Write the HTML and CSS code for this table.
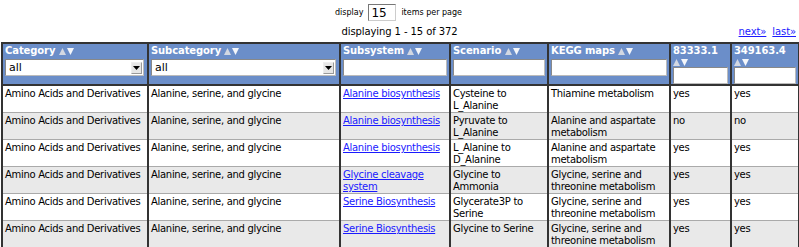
FILE: index.html
```html
<!DOCTYPE html>
<html>
<head>
<meta charset="utf-8">
<link rel="stylesheet" href="styles.css">
</head>
<body>
<div class="page">
  <div class="perpage">
    <span class="small">display</span>
    <input class="count" type="text" value="15">
    <span class="small">items per page</span>
  </div>
  <div class="pager">
    <span class="status">displaying 1 - 15 of 372</span>
    <span class="nav"><a href="#">next»</a><a href="#">last»</a></span>
  </div>
  <table class="grid">
    <colgroup>
      <col class="w1"><col class="w2"><col class="w3"><col class="w4"><col class="w5"><col class="w6"><col class="w7">
    </colgroup>
    <thead>
      <tr>
        <th><div class="ttl">Category <svg class="sort" viewBox="0 0 16 7" width="16" height="7"><polygon class="up" points="0,7 3.5,0 7,7"/><polygon class="dn" points="8,0 15,0 11.5,7"/></svg></div>
          <div class="sel sel1"><span class="val">all</span><span class="btn"><svg viewBox="0 0 7 4" width="7" height="4"><polygon points="0,0 7,0 3.5,4"/></svg></span></div></th>
        <th><div class="ttl">Subcategory <svg class="sort" viewBox="0 0 16 7" width="16" height="7"><polygon class="up" points="0,7 3.5,0 7,7"/><polygon class="dn" points="8,0 15,0 11.5,7"/></svg></div>
          <div class="sel sel2"><span class="val">all</span><span class="btn"><svg viewBox="0 0 7 4" width="7" height="4"><polygon points="0,0 7,0 3.5,4"/></svg></span></div></th>
        <th><div class="ttl">Subsystem <svg class="sort" viewBox="0 0 16 7" width="16" height="7"><polygon class="up" points="0,7 3.5,0 7,7"/><polygon class="dn" points="8,0 15,0 11.5,7"/></svg></div>
          <input class="flt" type="text"></th>
        <th><div class="ttl">Scenario <svg class="sort" viewBox="0 0 16 7" width="16" height="7"><polygon class="up" points="0,7 3.5,0 7,7"/><polygon class="dn" points="8,0 15,0 11.5,7"/></svg></div>
          <input class="flt" type="text"></th>
        <th><div class="ttl">KEGG maps <svg class="sort" viewBox="0 0 16 7" width="16" height="7"><polygon class="up" points="0,7 3.5,0 7,7"/><polygon class="dn" points="8,0 15,0 11.5,7"/></svg></div>
          <input class="flt" type="text"></th>
        <th><div class="ttl">83333.1 <svg class="sort" viewBox="0 0 16 7" width="16" height="7"><polygon class="up" points="0,7 3.5,0 7,7"/><polygon class="dn" points="8,0 15,0 11.5,7"/></svg></div>
          <input class="flt" type="text"></th>
        <th><div class="ttl">349163.4 <svg class="sort" viewBox="0 0 16 7" width="16" height="7"><polygon class="up" points="0,7 3.5,0 7,7"/><polygon class="dn" points="8,0 15,0 11.5,7"/></svg></div>
          <input class="flt" type="text"></th>
      </tr>
    </thead>
    <tbody>
      <tr>
        <td>Amino Acids and Derivatives</td><td>Alanine, serine, and glycine</td><td><a href="#">Alanine biosynthesis</a></td><td>Cysteine to L_Alanine</td><td>Thiamine metabolism</td><td>yes</td><td>yes</td>
      </tr>
      <tr class="alt">
        <td>Amino Acids and Derivatives</td><td>Alanine, serine, and glycine</td><td><a href="#">Alanine biosynthesis</a></td><td>Pyruvate to L_Alanine</td><td>Alanine and aspartate metabolism</td><td>no</td><td>no</td>
      </tr>
      <tr>
        <td>Amino Acids and Derivatives</td><td>Alanine, serine, and glycine</td><td><a href="#">Alanine biosynthesis</a></td><td>L_Alanine to D_Alanine</td><td>Alanine and aspartate metabolism</td><td>yes</td><td>yes</td>
      </tr>
      <tr class="alt">
        <td>Amino Acids and Derivatives</td><td>Alanine, serine, and glycine</td><td><a href="#">Glycine cleavage system</a></td><td>Glycine to Ammonia</td><td>Glycine, serine and threonine metabolism</td><td>yes</td><td>yes</td>
      </tr>
      <tr>
        <td>Amino Acids and Derivatives</td><td>Alanine, serine, and glycine</td><td><a href="#">Serine Biosynthesis</a></td><td>Glycerate3P to Serine</td><td>Glycine, serine and threonine metabolism</td><td>yes</td><td>yes</td>
      </tr>
      <tr class="alt">
        <td>Amino Acids and Derivatives</td><td>Alanine, serine, and glycine</td><td><a href="#">Serine Biosynthesis</a></td><td>Glycine to Serine</td><td>Glycine, serine and threonine metabolism</td><td>yes</td><td>yes</td>
      </tr>
    </tbody>
  </table>
</div>
</body>
</html>
```

FILE: styles.css
```css
html, body {
  margin: 0;
  padding: 0;
  background: #fff;
}
body {
  font-family: "DejaVu Sans", Verdana, sans-serif;
  color: #000;
}
.page {
  padding: 4px 1px 0 1px;
}
.perpage {
  display: flex;
  justify-content: center;
  align-items: center;
  gap: 5px;
  height: 17px;
  padding-right: 2px;
}
.small {
  font-size: 8px;
}
.count {
  width: 28px;
  height: 17px;
  box-sizing: border-box;
  margin: 0;
  padding: 0 2px;
  font: 12px "DejaVu Sans", sans-serif;
  border: 1px solid #777;
  border-right-color: #ccc;
  border-bottom-color: #ccc;
  outline: none;
}
.pager {
  display: flex;
  justify-content: center;
  position: relative;
  height: 21px;
  align-items: center;
  font-size: 10px;
  letter-spacing: -0.1px;
}
.nav {
  position: absolute;
  right: 2px;
  top: 5px;
  display: flex;
  gap: 6px;
}
.nav a {
  color: #1a1aff;
}
.grid {
  border-collapse: collapse;
  table-layout: fixed;
  width: 797px;
  border: 2px solid #333;
  font-size: 10px;
  letter-spacing: -0.3px;
  line-height: 12px;
}
.w1 { width: 146px; }
.w2 { width: 192px; }
.w3 { width: 110px; }
.w4 { width: 98px; }
.w5 { width: 122px; }
.w6 { width: 61px; }
.w7 { width: 68px; }
th {
  background: #6b8ec9;
  color: #fff;
  text-align: left;
  vertical-align: top;
  font-weight: bold;
  letter-spacing: -0.1px;
  line-height: 11px;
  padding: 1px 2px 0 2px;
  border-left: 2px solid #333;
  border-right: 2px solid #333;
  border-bottom: 2px solid #333;
  height: 38px;
}
.sort {
  vertical-align: -1px;
}
.sort .up { fill: #d3d8e2; }
.sort .dn { fill: #f4f6fa; }
.sel {
  display: flex;
  align-items: center;
  height: 17px;
  box-sizing: border-box;
  margin-top: 3px;
  background: #fff;
  border: 1px solid #888;
  border-right-color: #bbb;
  border-bottom-color: #bbb;
  font-weight: normal;
  color: #000;
  font-size: 11px;
  letter-spacing: 0;
  padding: 0 1px 0 3px;
}
.sel1 { width: 139px; }
.sel2 { width: 185px; }
.val { flex: 1; }
.btn {
  width: 11px;
  height: 12px;
  box-sizing: border-box;
  display: flex;
  align-items: center;
  justify-content: center;
  background: #e6e6e6;
  border: 1px solid #999;
  border-top-color: #eee;
  border-left-color: #eee;
}
.btn svg { fill: #000; }
.flt {
  display: block;
  width: 100%;
  height: 17px;
  box-sizing: border-box;
  margin: 3px 0 0 0;
  padding: 0 2px;
  border: 1px solid #888;
  border-right-color: #bbb;
  border-bottom-color: #bbb;
  background: #fff;
  outline: none;
}
th:nth-child(6) .flt, th:nth-child(7) .flt {
  margin-top: 0;
}
td {
  vertical-align: top;
  padding: 2px 2px 0 2px;
  border-left: 2px solid #333;
  border-right: 2px solid #333;
  border-bottom: 1px solid #aaa;
  height: 24px;
}
tr.alt td {
  background: #e9e9e9;
}
td a {
  color: #1a1aff;
}
```
